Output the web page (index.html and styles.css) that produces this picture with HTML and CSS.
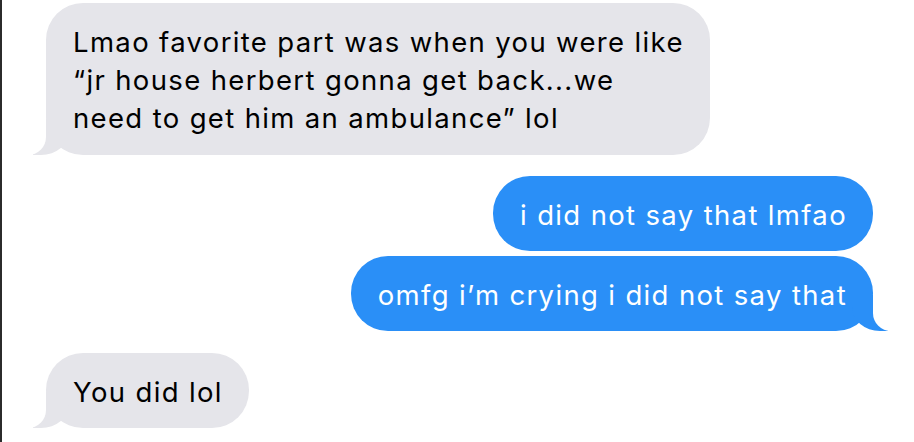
FILE: index.html
```html
<!DOCTYPE html>
<html lang="en">
<head>
  <meta charset="UTF-8">
  <title>Messages</title>
  <meta name="viewport" content="width=device-width, initial-scale=1.0">
  <link rel="stylesheet" href="styles.css">
</head>
<body>
  <main class="thread">
    <div class="bubble them first">
      Lmao favorite part was when you were like<br>
      “jr house herbert gonna get back...we<br>
      need to get him an ambulance” lol
    </div>

    <div class="bubble me">i did not say that lmfao</div>
    <div class="bubble me tail close">omfg i’m crying i did not say that</div>

    <div class="bubble them">You did lol</div>
  </main>
</body>
</html>
```

FILE: styles.css
```css
:root {
  --gray: #e5e5ea;
  --blue: #2a8ff7;
  --page: #ffffff;
}

html, body {
  margin: 0;
  padding: 0;
  height: 100%;
}

body {
  background: var(--page);
  border-left: 2px solid #2b2b2b;
  box-sizing: border-box;
  font-family: Inter, "Liberation Sans", sans-serif;
  overflow: hidden;
}

.thread {
  display: flex;
  flex-direction: column;
  padding: 3px 41px 0 44px;
}

.bubble {
  position: relative;
  width: fit-content;
  padding: 20px 26px 17px 27px;
  font-size: 27.5px;
  line-height: 38px;
  letter-spacing: 1.35px;
  border-radius: 37px;
  margin-top: 22px;
}

.bubble.first {
  margin-top: 0;
  padding-bottom: 18px;
  margin-bottom: -1px;
}

.bubble.close {
  margin-top: 5px;
}

.them {
  align-self: flex-start;
  background: var(--gray);
  color: #000;
}

.me {
  align-self: flex-end;
  background: var(--blue);
  color: #fff;
}

/* tails */
.them::before,
.them::after,
.me.tail::before,
.me.tail::after {
  content: "";
  position: absolute;
  bottom: 0;
  height: 36px;
}

.them::before {
  left: -13px;
  width: 36px;
  background: var(--gray);
  border-bottom-right-radius: 28px 24px;
}

.them::after {
  left: -44px;
  width: 44px;
  background: var(--page);
  border-bottom-right-radius: 18px;
}

.me.tail::before {
  right: -15px;
  width: 36px;
  background: var(--blue);
  border-bottom-left-radius: 28px 24px;
}

.me.tail::after {
  right: -44px;
  width: 44px;
  background: var(--page);
  border-bottom-left-radius: 18px;
}
```
